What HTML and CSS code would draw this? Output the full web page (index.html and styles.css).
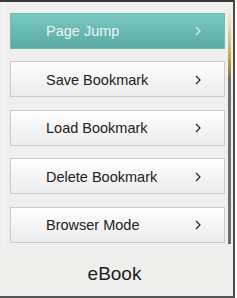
FILE: index.html
```html
<!DOCTYPE html>
<html lang="en">
<head>
  <meta charset="UTF-8">
  <title>eBook</title>
  <link rel="stylesheet" href="styles.css">
</head>
<body>
  <div class="screen">
    <div class="main">
      <div class="menu">
        <div class="item active">
          <span>Page Jump</span>
          <svg class="chev" viewBox="0 0 6 10" width="6" height="10"><polyline points="1,1 5,5 1,9"/></svg>
        </div>
        <div class="item">
          <span>Save Bookmark</span>
          <svg class="chev" viewBox="0 0 6 10" width="6" height="10"><polyline points="1,1 5,5 1,9"/></svg>
        </div>
        <div class="item">
          <span>Load Bookmark</span>
          <svg class="chev" viewBox="0 0 6 10" width="6" height="10"><polyline points="1,1 5,5 1,9"/></svg>
        </div>
        <div class="item">
          <span>Delete Bookmark</span>
          <svg class="chev" viewBox="0 0 6 10" width="6" height="10"><polyline points="1,1 5,5 1,9"/></svg>
        </div>
        <div class="item">
          <span>Browser Mode</span>
          <svg class="chev" viewBox="0 0 6 10" width="6" height="10"><polyline points="1,1 5,5 1,9"/></svg>
        </div>
      </div>
      <div class="scrollbar"><div class="thumb"></div></div>
    </div>
    <div class="title">eBook</div>
  </div>
</body>
</html>
```
FILE: styles.css
```css
body {
  margin: 0;
  background-color: #FFFFFF;
  font-family: 'Liberation Sans', Arial, sans-serif;
}
.screen {
  width: 233px;
  height: 294px;
  display: flex;
  flex-direction: column;
  background-color: #EFEFED;
  border-top: 2px solid #3A3A3A;
  border-right: 2px solid #4A4A4A;
  border-bottom: 2px solid #555555;
}
.main {
  display: flex;
  height: 242px;
}
.menu {
  flex: 1;
  display: flex;
  flex-direction: column;
  gap: 12.5px;
  padding: 10.5px 3px 0 6px;
  margin-left: 3px;
  border-left: 1px solid #F8F8F6;
}
.item {
  height: 36px;
  box-sizing: border-box;
  display: flex;
  align-items: center;
  justify-content: space-between;
  padding: 1px 23px 0 35px;
  border: 1px solid #CBCBCB;
  background: linear-gradient(#FEFEFE, #ECECEC);
  font-size: 14.5px;
  color: #222222;
}
.item .chev {
  fill: none;
  stroke: #222222;
  stroke-width: 1.2;
}
.item.active {
  border-color: #6DBDB6;
  background: linear-gradient(#79C8C1, #5AA9A2);
  color: #E9F5F3;
}
.item.active .chev {
  stroke: #D8F0EE;
}
.scrollbar {
  width: 3px;
  margin: 8px 2px 0 0;
  background-color: #6E6E6E;
}
.thumb {
  height: 66px;
  background: linear-gradient(#F4F0E4, #C9A850 70%, #8C7A40);
}
.title {
  flex: 1;
  display: flex;
  align-items: center;
  justify-content: center;
  font-size: 19px;
  color: #1E1E1E;
  padding: 7px 4px 0 0;
}
```
